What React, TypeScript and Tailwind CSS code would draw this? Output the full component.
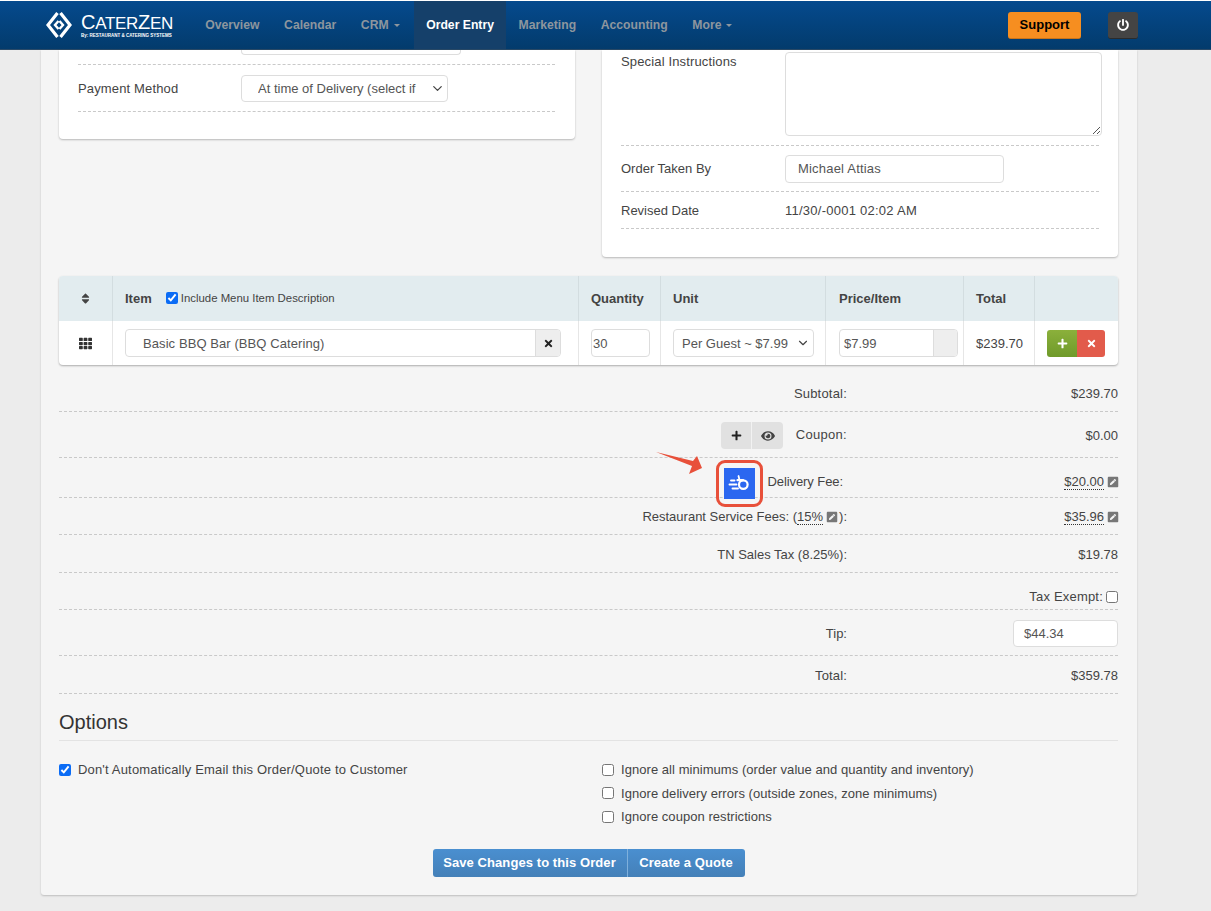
import { ChevronDown } from "lucide-react";
import { FaEye, FaPenSquare, FaPlus, FaPowerOff, FaSort, FaTh, FaTimes } from "react-icons/fa";
import type { ReactNode } from "react";

const navItems = [
  { label: "Overview" },
  { label: "Calendar" },
  { label: "CRM", caret: true },
  { label: "Order Entry", active: true },
  { label: "Marketing" },
  { label: "Accounting" },
  { label: "More", caret: true },
];

function Logo() {
  return (
    <div className="flex items-center gap-[9px] w-[135px] shrink-0 pl-[1px]">
      <svg width="26" height="28" viewBox="0 0 26 28" fill="none" stroke="white" strokeWidth="3.2">
        <path d="M11.5 2 L2 14 L11.5 26" />
        <path d="M14.5 2 L24 14 L14.5 26" />
        <path d="M12.5 10 L9 14 L12.5 18" strokeWidth="2.4" />
        <path d="M13.5 10 L17 14 L13.5 18" strokeWidth="2.4" />
      </svg>
      <div className="text-white leading-none">
        <div className="text-[20px] tracking-[-0.3px] whitespace-nowrap">
          C<span className="text-[17px]">ATER</span>Z<span className="text-[17px]">EN</span>
        </div>
        <div className="text-[4.5px] font-bold mt-[2px] whitespace-nowrap">By: RESTAURANT &amp; CATERING SYSTEMS</div>
      </div>
    </div>
  );
}

function Header() {
  return (
    <header className="h-[50px] shrink-0 border-t border-t-white bg-gradient-to-b from-[#054a8e] to-[#033b6c] border-b border-b-[#2a4a68] flex items-stretch pl-[45px] pr-[73px]">
      <Logo />
      <nav className="flex items-stretch ml-[13px]">
        {navItems.map((item) => (
          <div
            key={item.label}
            className={
              item.active
                ? "flex items-center px-[12.3px] text-[12.2px] font-bold text-white bg-[#15406a]"
                : "flex items-center px-[12.3px] text-[12.2px] font-bold text-[#8d969e]"
            }
          >
            {item.label}
            {item.caret && <span className="ml-[5px] mr-[2px] w-0 h-0 border-x-[3.5px] border-x-transparent border-t-[3.5px] border-t-[#8d969e]" />}
          </div>
        ))}
      </nav>
      <div className="ml-auto flex items-center gap-[27px]">
        <button className="h-[27px] w-[73px] rounded-[3px] bg-[#f68e20] border-b border-b-[#c9741a] text-[13px] font-bold text-black">Support</button>
        <button className="h-[27px] w-[30px] rounded-[3px] bg-[#444444] border-b border-b-[#2b2b2b] flex items-center justify-center text-white">
          <FaPowerOff size={12} />
        </button>
      </div>
    </header>
  );
}

function TopCards() {
  return (
    <div className="flex justify-between items-start">
      <section className="w-[516px] h-[89px] bg-white rounded-b-[4px] shadow-[0_1px_2px_rgba(0,0,0,0.25)] pl-[19px] pr-[20px]">
        <div className="h-[15px] border-b border-dashed border-b-[#c9c9c9] pl-[163px]">
          <div className="w-[220px] h-[5px] border border-t-0 border-[#dddddd] rounded-b-[4px]" />
        </div>
        <div className="flex items-center h-[47px] border-b border-dashed border-b-[#c9c9c9]">
          <div className="w-[163px] shrink-0 pt-[2px] text-[13px] tracking-[0.15px]">Payment Method</div>
          <div className="relative w-[207px] h-[27px] border border-[#dddddd] rounded-[4px] flex items-center pl-[16px] pr-[29px] pt-[1px] text-[13px] text-[#555555] whitespace-nowrap">
            <span className="overflow-hidden">At time of Delivery (select if you wish)</span>
            <ChevronDown size={15} className="absolute right-[2px] top-[5px] text-[#444444]" />
          </div>
        </div>
      </section>
      <section className="w-[516px] h-[207px] bg-white rounded-b-[4px] shadow-[0_1px_2px_rgba(0,0,0,0.25)] pl-[19px] pr-[19px]">
        <div className="flex items-start h-[96px] border-b border-dashed border-b-[#c9c9c9]">
          <div className="w-[164px] shrink-0 text-[13px] tracking-[0.15px] mt-[2px]">Special Instructions</div>
          <div className="relative shrink-0 w-[317px] h-[84px] mt-[2px] border border-[#dddddd] rounded-[4px]">
            <svg className="absolute right-[1px] bottom-[1px]" width="8" height="8" viewBox="0 0 8 8" stroke="#555555" strokeWidth="1">
              <path d="M1 8 L8 1 M5 8 L8 5" />
            </svg>
          </div>
        </div>
        <div className="flex items-center h-[46px] border-b border-dashed border-b-[#c9c9c9]">
          <div className="w-[164px] shrink-0 text-[13px] pt-[1px]">Order Taken By</div>
          <div className="w-[219px] h-[28px] border border-[#dddddd] rounded-[4px] flex items-center pl-[12px] pt-[1px] text-[13px] tracking-[0.2px] text-[#555555]">Michael Attias</div>
        </div>
        <div className="flex items-center h-[37px] pt-[2px] border-b border-dashed border-b-[#c9c9c9]">
          <div className="w-[164px] shrink-0 text-[13px]">Revised Date</div>
          <div className="text-[13px] tracking-[0.25px]">11/30/-0001 02:02 AM</div>
        </div>
      </section>
    </div>
  );
}

function ItemsTable() {
  const th = "border-l border-l-[#d3dde0] text-left px-[12px] text-[13px] font-bold";
  const td = "border-l border-l-[#e6e6e6] px-[12px] text-[13px]";
  return (
    <table className="w-[1059px] mt-[19px] table-fixed bg-white rounded-[4px] shadow-[0_1px_2px_rgba(0,0,0,0.3)] border-separate border-spacing-0 overflow-hidden">
      <colgroup>
        <col className="w-[53px]" />
        <col className="w-[466px]" />
        <col className="w-[82px]" />
        <col className="w-[165px]" />
        <col className="w-[138px]" />
        <col className="w-[71px]" />
        <col />
      </colgroup>
      <thead>
        <tr className="h-[45px] bg-[#e2ecef]">
          <th>
            <FaSort size={13} className="mx-auto text-[#444444]" />
          </th>
          <th className={th}>
            <div className="flex items-center">
              Item
              <label className="ml-[14px] flex items-center gap-[3px] text-[11.4px] font-normal">
                <input type="checkbox" defaultChecked className="m-0 w-[12px] h-[12px] accent-[#0b6cf5]" />
                Include Menu Item Description
              </label>
            </div>
          </th>
          <th className={th}>Quantity</th>
          <th className={th}>Unit</th>
          <th className="border-l border-l-[#d3dde0] text-left pl-[13px] text-[13px] font-bold">Price/Item</th>
          <th className={th}>Total</th>
          <th className={th} />
        </tr>
      </thead>
      <tbody>
        <tr className="h-[44px]">
          <td>
            <FaTh size={13} className="mx-auto text-[#333333]" />
          </td>
          <td className="border-l border-l-[#e6e6e6] pl-[12px] pr-[17px] text-[13px]">
            <div className="flex h-[28px] border border-[#dddddd] rounded-[4px] overflow-hidden text-[#555555]">
              <div className="flex-1 flex items-center pl-[17px] pt-[1px] tracking-[0.08px]">Basic BBQ Bar (BBQ Catering)</div>
              <div className="w-[25px] bg-[#eeeeee] border-l border-l-[#dddddd] flex items-center justify-center text-[#222222]">
                <FaTimes size={11} />
              </div>
            </div>
          </td>
          <td className={td}>
            <div className="w-[59px] h-[28px] border border-[#dddddd] rounded-[4px] flex items-center pl-[1px] pt-[1px] text-[#555555]">30</div>
          </td>
          <td className={td}>
            <div className="relative w-[141px] h-[28px] border border-[#dddddd] rounded-[4px] flex items-center pl-[8px] pt-[1px] text-[#555555] whitespace-nowrap">
              Per Guest ~ $7.99
              <ChevronDown size={14} className="absolute right-[3px] top-[6px] text-[#444444]" />
            </div>
          </td>
          <td className="border-l border-l-[#e6e6e6] pl-[13px] text-[13px]">
            <div className="flex w-[119px] h-[28px] border border-[#dddddd] rounded-[4px] overflow-hidden text-[#555555]">
              <div className="flex-1 flex items-center pl-[4px] pt-[1px]">$7.99</div>
              <div className="w-[24px] bg-[#eeeeee] border-l border-l-[#dddddd]" />
            </div>
          </td>
          <td className="border-l border-l-[#e6e6e6] px-[12px] pt-[2px] text-[13px]">$239.70</td>
          <td className={td}>
            <div className="flex w-[58px] h-[27px] rounded-[3px] overflow-hidden text-white">
              <div className="w-[30px] bg-gradient-to-b from-[#8bb03b] to-[#6f9a2a] flex items-center justify-center">
                <FaPlus size={11} />
              </div>
              <div className="flex-1 bg-[#e25b4b] flex items-center justify-center">
                <FaTimes size={11} />
              </div>
            </div>
          </td>
        </tr>
      </tbody>
    </table>
  );
}

function TotalRow({ h, label, value, pad = "" }: { h: string; label: ReactNode; value?: ReactNode; pad?: string }) {
  return (
    <div className={`flex border-b border-dashed border-b-[#c9c9c9] text-[13px] ${h}`}>
      <div className={`w-[788px] flex items-center justify-end ${pad}`}>{label}</div>
      <div className={`flex-1 flex items-center justify-end ${pad}`}>{value}</div>
    </div>
  );
}

function Editable({ value }: { value: string }) {
  return (
    <>
      <span className="border-b border-dotted border-b-[#333333] leading-[14px]">{value}</span>
      <FaPenSquare size={12} className="ml-[3px] -mr-[1px] text-[#777777]" />
    </>
  );
}

function DeliveryIcon() {
  return (
    <div className="relative translate-y-px w-[31px] h-[31px] bg-[#2b67f0] mr-[12px]">
      <div className="absolute -inset-[8px] border-[3.5px] border-[#e8503a] rounded-[9px]" />
      <svg width="31" height="31" viewBox="0 0 31 31" fill="none" stroke="white" strokeLinecap="round">
        <circle cx="19.3" cy="16.6" r="4.3" strokeWidth="2.2" />
        <path d="M13.5 12.2 H19" strokeWidth="2.2" />
        <path d="M14.5 8 L15.5 12" strokeWidth="1.8" />
        <path d="M7 12.5 H10.5 M5.5 16.5 H12.5 M8.5 20.5 H14" strokeWidth="1.9" />
      </svg>
    </div>
  );
}

function Totals() {
  return (
    <div className="mt-[10px]">
      <TotalRow h="h-[37px]" pad="pt-[2px]" label={<span className="tracking-[0.2px]">Subtotal:</span>} value="$239.70" />
      <TotalRow
        h="h-[46px]"
        label={
          <>
            <div className="flex translate-y-px w-[62px] h-[27px] rounded-[4px] bg-[#e1e1e1] mr-[13px] overflow-hidden">
              <div className="flex-1 flex items-center justify-center text-[#222222]">
                <FaPlus size={11} />
              </div>
              <div className="flex-1 flex items-center justify-center border-l border-l-[#f2f2f2] text-[#444444]">
                <FaEye size={14} />
              </div>
            </div>
            <span className="tracking-[0.3px]">Coupon:</span>
          </>
        }
        value={<span className="pt-[2px]">$0.00</span>}
      />
      <TotalRow
        h="h-[40px]"
        pad="pt-[9px]"
        label={
          <div className="relative flex items-center pr-[4px] tracking-[-0.08px]">
            <svg className="absolute left-[-68px] top-[-15px]" width="47" height="23" viewBox="0 0 47 23" fill="#e8503a">
              <path d="M0 0 L37 9 L41 4 L46 16 L33 22 L36 14 Z" />
            </svg>
            <DeliveryIcon />
            Delivery Fee:
          </div>
        }
        value={<Editable value="$20.00" />}
      />
      <TotalRow
        h="h-[37px]"
        pad="pt-[2px]"
        label={
          <>
            Restaurant Service Fees: (<span className="border-b border-dotted border-b-[#333333] leading-[14px]">15%</span>
            <FaPenSquare size={12} className="ml-[3px] mr-[1px] text-[#777777]" />):
          </>
        }
        value={<Editable value="$35.96" />}
      />
      <TotalRow h="h-[38px]" pad="pt-[2px]" label="TN Sales Tax (8.25%):" value="$19.78" />
      <TotalRow
        h="h-[37px]"
        label=""
        pad="pt-[12px]"
        value={
          <label className="flex items-center gap-[3px] tracking-[0.2px]">
            Tax Exempt:
            <input type="checkbox" className="m-0 w-[12px] h-[12px]" />
          </label>
        }
      />
      <TotalRow
        h="h-[46px]"
        pad="pt-[2px]"
        label="Tip:"
        value={<div className="w-[105px] h-[27px] bg-white border border-[#dddddd] rounded-[4px] flex items-center pl-[10px] text-[#555555]">$44.34</div>}
      />
      <TotalRow h="h-[38px]" pad="pt-[2px]" label={<span className="tracking-[0.15px]">Total:</span>} value="$359.78" />
    </div>
  );
}

function Check({ label, checked, wide }: { label: string; checked?: boolean; wide?: boolean }) {
  return (
    <label className={wide ? "flex items-center gap-[7px] text-[13px] h-[23.5px] tracking-[0.17px]" : "flex items-center gap-[7px] text-[13px] h-[23.5px] tracking-[0.05px]"}>
      <input type="checkbox" defaultChecked={checked} className="m-0 w-[12px] h-[12px] accent-[#0b6cf5]" />
      {label}
    </label>
  );
}

function Options() {
  return (
    <div className="mt-[15px]">
      <h2 className="text-[20px] leading-[26px] pb-[5px] border-b border-b-[#e3e3e3] text-[#333333]">Options</h2>
      <div className="flex mt-[17px]">
        <div className="w-[543px]">
          <Check checked wide label="Don't Automatically Email this Order/Quote to Customer" />
        </div>
        <div>
          <Check label="Ignore all minimums (order value and quantity and inventory)" />
          <Check label="Ignore delivery errors (outside zones, zone minimums)" />
          <Check label="Ignore coupon restrictions" />
        </div>
      </div>
      <div className="flex justify-center mt-[20px]">
        <div className="flex h-[28px] rounded-[3px] overflow-hidden text-[13px] font-bold text-white tracking-[0.08px] bg-gradient-to-b from-[#4a8fd0] to-[#4480b8]">
          <div className="w-[195px] flex items-center justify-center border-r border-r-[#7fb0dc]">Save Changes to this Order</div>
          <div className="w-[117px] flex items-center justify-center">Create a Quote</div>
        </div>
      </div>
    </div>
  );
}

export default function App() {
  return (
    <div className="h-[911px] overflow-hidden flex flex-col bg-[#ececec] text-[#444444] font-['Liberation_Sans',Arial,sans-serif]">
      <Header />
      <main className="ml-[41px] w-[1096px] h-[845px] bg-[#f5f5f5] rounded-b-[3px] shadow-[0_1px_2px_rgba(0,0,0,0.2)] pl-[18px] pr-[19px]">
        <TopCards />
        <ItemsTable />
        <Totals />
        <Options />
      </main>
    </div>
  );
}
